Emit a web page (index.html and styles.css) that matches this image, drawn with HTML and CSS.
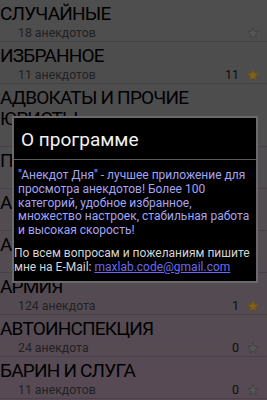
FILE: index.html
```html
<!DOCTYPE html>
<html lang="ru">
<head>
<meta charset="utf-8">
<link rel="stylesheet" href="styles.css">
</head>
<body>
<div class="screen">
  <ul class="list">
    <li class="row">
      <div class="title">СЛУЧАЙНЫЕ</div>
      <div class="line"><span class="sub">18 анекдотов</span><span class="meta"><svg class="star grey" viewBox="0 0 12 12"><polygon points="6,0.8 7.6,4.2 11.3,4.6 8.5,7.1 9.3,10.8 6,8.9 2.7,10.8 3.5,7.1 0.7,4.6 4.4,4.2"/></svg></span></div>
    </li>
    <li class="row">
      <div class="title">ИЗБРАННОЕ</div>
      <div class="line"><span class="sub">11 анекдотов</span><span class="meta"><span class="count">11</span><svg class="star gold" viewBox="0 0 12 12"><polygon points="6,0.8 7.6,4.2 11.3,4.6 8.5,7.1 9.3,10.8 6,8.9 2.7,10.8 3.5,7.1 0.7,4.6 4.4,4.2"/></svg></span></div>
    </li>
    <li class="row">
      <div class="title">АДВОКАТЫ И ПРОЧИЕ ЮРИСТЫ</div>
      <div class="line"><span class="sub">56 анекдотов</span><span class="meta"><span class="count">0</span><svg class="star grey" viewBox="0 0 12 12"><polygon points="6,0.8 7.6,4.2 11.3,4.6 8.5,7.1 9.3,10.8 6,8.9 2.7,10.8 3.5,7.1 0.7,4.6 4.4,4.2"/></svg></span></div>
    </li>
    <li class="row">
      <div class="title">ПЕНСИОНЕРЫ</div>
      <div class="line"><span class="sub">31 анекдот</span><span class="meta"><span class="count">0</span><svg class="star grey" viewBox="0 0 12 12"><polygon points="6,0.8 7.6,4.2 11.3,4.6 8.5,7.1 9.3,10.8 6,8.9 2.7,10.8 3.5,7.1 0.7,4.6 4.4,4.2"/></svg></span></div>
    </li>
    <li class="row">
      <div class="title">АЛКОГОЛИКИ</div>
      <div class="line"><span class="sub">87 анекдотов</span><span class="meta"><span class="count">0</span><svg class="star grey" viewBox="0 0 12 12"><polygon points="6,0.8 7.6,4.2 11.3,4.6 8.5,7.1 9.3,10.8 6,8.9 2.7,10.8 3.5,7.1 0.7,4.6 4.4,4.2"/></svg></span></div>
    </li>
    <li class="row">
      <div class="title">АМЕРИКАНЦЫ</div>
      <div class="line"><span class="sub">42 анекдота</span><span class="meta"><span class="count">0</span><svg class="star grey" viewBox="0 0 12 12"><polygon points="6,0.8 7.6,4.2 11.3,4.6 8.5,7.1 9.3,10.8 6,8.9 2.7,10.8 3.5,7.1 0.7,4.6 4.4,4.2"/></svg></span></div>
    </li>
    <li class="row">
      <div class="title">АРМИЯ</div>
      <div class="line"><span class="sub">124 анекдота</span><span class="meta"><span class="count">1</span><svg class="star gold" viewBox="0 0 12 12"><polygon points="6,0.8 7.6,4.2 11.3,4.6 8.5,7.1 9.3,10.8 6,8.9 2.7,10.8 3.5,7.1 0.7,4.6 4.4,4.2"/></svg></span></div>
    </li>
    <li class="row">
      <div class="title">АВТОИНСПЕКЦИЯ</div>
      <div class="line"><span class="sub">24 анекдота</span><span class="meta"><span class="count">0</span><svg class="star grey" viewBox="0 0 12 12"><polygon points="6,0.8 7.6,4.2 11.3,4.6 8.5,7.1 9.3,10.8 6,8.9 2.7,10.8 3.5,7.1 0.7,4.6 4.4,4.2"/></svg></span></div>
    </li>
    <li class="row">
      <div class="title">БАРИН И СЛУГА</div>
      <div class="line"><span class="sub">11 анекдотов</span><span class="meta"><span class="count">0</span><svg class="star grey" viewBox="0 0 12 12"><polygon points="6,0.8 7.6,4.2 11.3,4.6 8.5,7.1 9.3,10.8 6,8.9 2.7,10.8 3.5,7.1 0.7,4.6 4.4,4.2"/></svg></span></div>
    </li>
  </ul>
  <div class="dim"></div>
  <div class="dialog">
    <div class="dialog-title">О программе</div>
    <div class="dialog-body">
      <p class="lead">"Анекдот Дня" - лучшее приложение для просмотра анекдотов! Более 100 категорий, удобное избранное, множество настроек, стабильная работа и высокая скорость!</p>
      <p class="contact">По всем вопросам и пожеланиям пишите мне на E-Mail: <a href="#" class="mail">maxlab.code@gmail.com</a></p>
    </div>
  </div>
</div>
</body>
</html>
```
FILE: styles.css
```css
html, body {
  margin: 0;
  padding: 0;
}
body {
  font-family: Roboto, "Liberation Sans", sans-serif;
}
.screen {
  position: relative;
  width: 267px;
  height: 400px;
  overflow: hidden;
  background: linear-gradient(#9c9c9c, #9e9a9e 40%, #b094aa);
}
.list {
  list-style: none;
  margin: 0;
  padding: 0;
}
.row {
  padding-top: 3px;
  border-bottom: 1px solid rgba(0, 0, 0, 0.14);
}
.title {
  font-size: 19px;
  letter-spacing: -0.8px;
  line-height: 21px;
  color: #000;
  padding-right: 60px;
}
.line {
  display: flex;
  justify-content: space-between;
  align-items: center;
  height: 17px;
  padding-left: 18px;
  padding-right: 8px;
}
.sub {
  font-size: 12.3px;
  color: #444;
}
.meta {
  display: flex;
  align-items: center;
  gap: 8px;
}
.count {
  font-size: 12.5px;
  color: #1a1a1a;
}
.star {
  width: 12px;
  height: 12px;
  display: block;
}
.star.grey polygon {
  fill: #adadad;
  stroke: #808080;
  stroke-width: 0.9;
  stroke-linejoin: round;
}
.star.gold polygon {
  fill: #ffc43a;
  stroke: #d8a020;
  stroke-width: 0.9;
  stroke-linejoin: round;
}
.dim {
  position: absolute;
  inset: 0;
  background: rgba(0, 0, 0, 0.5);
}
.dialog {
  position: absolute;
  left: 12px;
  top: 116px;
  width: 242px;
  height: 163px;
  background: #000;
  border: 2px solid #6a6a6a;
}
.dialog-title {
  font-size: 19px;
  line-height: 39px;
  padding-top: 2px;
  color: #f2f2f2;
  padding-left: 7px;
  border-bottom: 1px solid #5a5a5a;
}
.dialog-body {
  padding-top: 9px;
  font-size: 12px;
  line-height: 13.8px;
}
.dialog-body p {
  margin: 0;
}
.lead {
  padding: 0 4px;
  color: #a4a4f4;
}
.contact {
  margin-top: 9px !important;
  color: #d4d4d4;
}
.mail {
  color: #6a6af0;
  text-decoration: underline;
}
```
